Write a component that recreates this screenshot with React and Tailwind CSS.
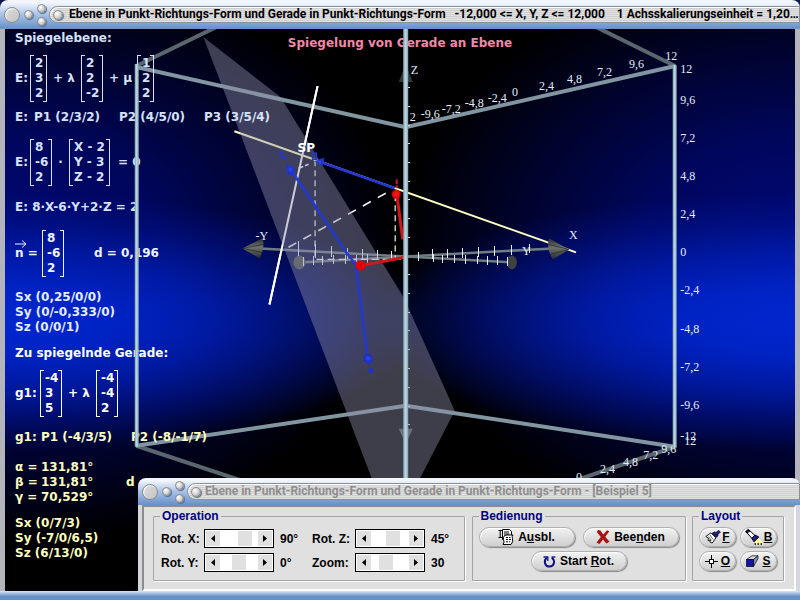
import React, { useState } from "react";
import clsx from "clsx";

const topScale = [
  { x: 409, y: 121, t: "2" },
  { x: 420, y: 118, t: "-9,6" },
  { x: 441, y: 113, t: "-7,2" },
  { x: 464, y: 107, t: "-4,8" },
  { x: 487, y: 102, t: "-2,4" },
  { x: 511, y: 96, t: "0" },
  { x: 538, y: 90, t: "2,4" },
  { x: 566, y: 83, t: "4,8" },
  { x: 596, y: 76, t: "7,2" },
  { x: 628, y: 68, t: "9,6" },
  { x: 664, y: 60, t: "12" },
];

const rightScale = [
  { x: 679, y: 73, t: "12" },
  { x: 679, y: 104, t: "9,6" },
  { x: 679, y: 142, t: "7,2" },
  { x: 679, y: 180, t: "4,8" },
  { x: 679, y: 218, t: "2,4" },
  { x: 679, y: 256, t: "0" },
  { x: 679, y: 294, t: "-2,4" },
  { x: 679, y: 332, t: "-4,8" },
  { x: 679, y: 370, t: "-7,2" },
  { x: 679, y: 408, t: "-9,6" },
  { x: 679, y: 439, t: "-12" },
  { x: 683, y: 444, t: "12" },
];

const bottomScale = [
  { x: 575, y: 480, t: "0" },
  { x: 599, y: 472, t: "2,4" },
  { x: 622, y: 465, t: "4,8" },
  { x: 642, y: 458, t: "7,2" },
  { x: 660, y: 452, t: "9,6" },
];

// tick marks as [x, top, bottom]
const ticks = [
  [418, 252, 261], [432, 249, 259], [447, 249, 258], [462, 248, 258], [478, 247, 257],
  [494, 246, 256], [511, 245, 255], [529, 244, 253],
  [433, 254, 262], [442, 255, 263], [454, 255, 263], [465, 255, 264], [477, 256, 264],
  [487, 256, 265], [497, 256, 265], [507, 257, 266],
  [298, 241, 256], [315, 244, 258], [331, 246, 257], [347, 248, 259], [362, 249, 259],
  [377, 250, 260], [391, 251, 261], [303, 257, 266], [313, 256, 265], [322, 256, 265],
  [333, 255, 264], [345, 255, 264], [356, 255, 263], [367, 254, 263],
];

const zTicks = [87, 106, 125, 143, 162, 181, 199, 218, 237, 274, 293, 312, 330, 349, 368, 387, 406, 424];

function Scale({ items }) {
  return items.map((i) => (
    <text key={i.x + i.t + i.y} x={i.x} y={i.y}>
      {i.t}
    </text>
  ));
}

function Scene() {
  return (
    <svg className="absolute inset-0 h-full w-full" viewBox="5 29 790 561" preserveAspectRatio="xMinYMin slice">
      <defs>
        <radialGradient id="redBall">
          <stop offset="0" stopColor="#ff2020" />
          <stop offset="1" stopColor="#d00000" />
        </radialGradient>
        <radialGradient id="blueBall">
          <stop offset="0" stopColor="#2c48f0" />
          <stop offset="1" stopColor="#1c2cb0" />
        </radialGradient>
        <linearGradient id="cone" x1="0" x2="0" y1="0" y2="1">
          <stop offset="0" stopColor="#2a2d2c" />
          <stop offset="0.45" stopColor="#6c736f" />
          <stop offset="1" stopColor="#252827" />
        </linearGradient>
      </defs>

      {/* back edges of the cube */}
      <g strokeWidth="4" stroke="#5a666e">
        <line x1="136" y1="66" x2="216" y2="27" />
        <line x1="674" y1="66" x2="595" y2="27" />
        <line x1="136" y1="445" x2="242" y2="480" />
        <line x1="674" y1="446" x2="570" y2="481" />
      </g>
      <g strokeWidth="4" stroke="#8296a2" fill="none">
        <polyline points="136,67 405,127 674,66" />
        <polyline points="136,445 405,405 674,446" />
      </g>

      {/* axes */}
      <g fill="#343837">
        <path d="M405 64 L412 82 L398 82 Z" />
        <path d="M398 428 L412 428 L405 443 Z" fill="#555b5c" />
      </g>
      <g stroke="#6f7d83" strokeWidth="2.5">
        <line x1="260" y1="248" x2="510" y2="262" />
        <line x1="299" y1="262" x2="552" y2="248" />
      </g>
      <ellipse cx="511" cy="262" rx="5" ry="7" fill="#3c4240" />
      <ellipse cx="299" cy="262" rx="6" ry="7" fill="#4a4e4d" />
      <path d="M242 248 L262 238 Q265 248 259 258 Z" fill="url(#cone)" />
      <path d="M242 248 L263 244 M242 248 L262 252" stroke="#1c1e1d" strokeWidth="0.6" />
      <g stroke="#e4ecf2" strokeWidth="1" shapeRendering="crispEdges">
        {ticks.map(([x, a, b], i) => (
          <line key={i} x1={x} y1={a} x2={x} y2={b} />
        ))}
        {zTicks.map((y) => (
          <line key={y} x1="404" y1={y} x2="409" y2={y} />
        ))}
      </g>

      <g strokeWidth="1.6" stroke="#f4f4f4" fill="none">
        <line x1="385" y1="193" x2="286" y2="248" strokeDasharray="9 8" />
        <line x1="298" y1="168" x2="308" y2="164" strokeDasharray="5 2" />
        <line x1="314.5" y1="160" x2="314.5" y2="258" strokeDasharray="6 4" strokeWidth="1.2" />
        <line x1="394.5" y1="195" x2="394.5" y2="257" strokeDasharray="6 4" strokeWidth="1.2" />
        <line x1="316" y1="259" x2="402" y2="259" strokeDasharray="7 4" strokeWidth="1.2" />
      </g>

      <line x1="317" y1="86" x2="269" y2="304" stroke="#fff" strokeWidth="2" />
      <line x1="234" y1="131" x2="575" y2="252" stroke="#ffffc4" strokeWidth="2" />
      <path d="M568 249 L548 238 Q545 249 552 259 Z" fill="url(#cone)" />
      <path d="M568 249 L547 244 M568 249 L549 254" stroke="#1c1e1d" strokeWidth="0.6" />

      {/* mirror plane */}
      <polygon points="203,37 280,97 403,297 454,410 418,480 372,480" fill="#8d8da8" fillOpacity="0.44" />

      <g stroke="#fff" strokeWidth="2">
        <line x1="317" y1="86" x2="304" y2="145" />
        <line x1="280" y1="254" x2="269" y2="304" />
      </g>

      {/* vectors */}
      <g stroke="#2338d0" strokeWidth="2.5" fill="none">
        <line x1="318" y1="161" x2="394" y2="188" />
        <polyline points="290,169 345,251 355,264 367,357" />
      </g>
      <path d="M314 161 L324 157 L322 166 Z" fill="url(#blueBall)" />
      <path d="M286 164 L294 168 L292 174 L287 174 Z" fill="url(#blueBall)" stroke="#2338d0" />
      <ellipse cx="367.5" cy="358" rx="5" ry="4.5" fill="url(#blueBall)" />
      <path d="M364 360 L371 360 L369 365 Z" fill="#1f33c4" />
      <circle cx="370" cy="370" r="2.5" fill="#1f33c4" />
      <path d="M279 152 l3 2 M281 156 l4 3" stroke="#2338d0" strokeWidth="3" />
      <path d="M312 153 h4 v6 h-4 z" stroke="#2338d0" strokeWidth="1.3" fill="none" />
      <g stroke="#d01818" strokeWidth="3">
        <line x1="396" y1="193" x2="402" y2="239" />
        <line x1="360" y1="265" x2="403" y2="257" />
        <line x1="396" y1="179" x2="396" y2="188" strokeWidth="2" strokeDasharray="5 1" />
      </g>
      <circle cx="395.5" cy="194" r="4.5" fill="url(#redBall)" />
      <circle cx="360" cy="265" r="5" fill="url(#redBall)" />
      <path d="M354 262 L362 260 L362 270 Z" fill="#e00000" />

      <g className="text-[12px]" fill="#e2eefa" fontFamily="Liberation Serif, serif">
        <Scale items={topScale} />
        <Scale items={rightScale} />
        <Scale items={bottomScale} />
        <text x="568" y="239">X</text>
        <text x="255" y="240">-Y</text>
        <text x="410" y="74">Z</text>
        <text x="521" y="255">Y</text>
      </g>
      <text x="297" y="152" className="text-[12px] font-bold" fill="#fff" fontFamily="DejaVu Sans, sans-serif">
        SP
      </text>
    </svg>
  );
}

// upright cube edges, they run in front of the formulas
function Poles() {
  return (
    <svg className="pointer-events-none absolute inset-0 h-full w-full" viewBox="5 29 790 561" preserveAspectRatio="xMinYMin slice">
      <defs>
        <linearGradient id="pole" x1="0" x2="1">
          <stop offset="0" stopColor="#7f9eac" />
          <stop offset="0.5" stopColor="#bfdbe5" />
          <stop offset="1" stopColor="#7f9eac" />
        </linearGradient>
      </defs>
      <rect x="134.5" y="64" width="4" height="382" fill="url(#pole)" />
      <rect x="671.5" y="65" width="4" height="382" fill="url(#pole)" />
      <rect x="402.5" y="29" width="5" height="450" fill="url(#pole)" />
    </svg>
  );
}

function Matrix({ rows, className }) {
  return (
    <div className={clsx("relative shrink-0 py-px pl-[5px]", className)}>
      <span className="absolute inset-y-0 left-0 w-1 border-y border-l border-current" />
      {rows.map((r, i) => (
        <div key={i} className="whitespace-nowrap">{r}</div>
      ))}
      <span className="absolute inset-y-0 right-0 w-1 border-y border-r border-current" />
    </div>
  );
}

function Formulas() {
  return (
    <div className="relative pl-[10px] pt-[2px] font-['DejaVu_Sans',sans-serif] text-[12px] font-bold leading-[15px] text-[#d6e2fb] whitespace-pre">
      <p>Spiegelebene:</p>
      <div className="mt-[9px] flex items-center">
        <span className="w-[15px]">E:</span>
        <Matrix rows={["2", "3", "2"]} className="w-[17px]" />
        <span className="w-[34px] pl-[6px]">+ λ</span>
        <Matrix rows={["2", "2", "-2"]} className="w-[22px]" />
        <span className="w-[34px] pl-[6px]">+ μ</span>
        <Matrix rows={["1", "2", "2"]} className="w-[17px]" />
      </div>
      <div className="mt-2 flex">
        <span className="w-[19px]">E:</span>
        <span className="w-[85px]">P1 (2/3/2)</span>
        <span className="w-[85px]">P2 (4/5/0)</span>
        <span>P3 (3/5/4)</span>
      </div>
      <div className="mt-[14px] flex items-center">
        <span className="w-[15px]">E:</span>
        <Matrix rows={["8", "-6", "2"]} className="w-[22px]" />
        <span className="w-[17px] text-center">·</span>
        <Matrix rows={["X - 2", "Y - 3", "Z - 2"]} className="w-[41px]" />
        <span className="pl-2">= 0</span>
      </div>
      <p className="mt-[14px]">E: 8·X-6·Y+2·Z = 2</p>

      <div className="mt-[15px] flex items-center text-[#eef4ff]">
        <span className="relative w-[27px]">
          n =
          <svg className="absolute -top-[6px] left-0 h-2 w-3" viewBox="0 0 12 8" fill="none" stroke="currentColor">
            <path d="M0 4 H11 M7 0.5 L11 4 L7 7.5" />
          </svg>
        </span>
        <Matrix rows={["8", "-6", "2"]} className="w-[22px]" />
        <span className="pl-[30px]">d = 0,196</span>
      </div>
      <div className="mt-[13px] text-[#e4ecff]">
        <p>Sx (0,25/0/0)</p>
        <p>Sy (0/-0,333/0)</p>
        <p>Sz (0/0/1)</p>
      </div>

      <p className="mt-[11px] text-[#fffff0]">Zu spiegelnde Gerade:</p>
      <div className="mt-[9px] flex items-center text-[#fffff0]">
        <span className="w-[25px]">g1:</span>
        <Matrix rows={["-4", "3", "5"]} className="w-[22px]" />
        <span className="w-[34px] pl-[6px]">+ λ</span>
        <Matrix rows={["-4", "-4", "2"]} className="w-[22px]" />
      </div>
      <div className="mt-[13px] flex text-[#ffffc0]">
        <span className="w-[26px]">g1:</span>
        <span className="w-[90px]">P1 (-4/3/5)</span>
        <span>P2 (-8/-1/7)</span>
      </div>
      <div className="mt-[15px] grid grid-cols-[26px_85px_auto] text-[#ffffc0]">
        <span>α =</span>
        <span>131,81°</span>
        <span />
        <span>β =</span>
        <span>131,81°</span>
        <span>d</span>
        <span>γ =</span>
        <span>70,529°</span>
      </div>
      <div className="mt-[11px] text-[#ffffc0]">
        <p>Sx (0/7/3)</p>
        <p>Sy (-7/0/6,5)</p>
        <p>Sz (6/13/0)</p>
      </div>
    </div>
  );
}

function Orb({ className, label }) {
  return (
    <button
      type="button"
      aria-label={label}
      className={clsx(
        "shrink-0 rounded-full border border-[#8a8a8a] bg-radial-[at_35%_30%] from-white via-[#d4d4d4] to-[#9c9c9c] shadow-[1px_1px_1px_#55709a]",
        className
      )}
    />
  );
}

function TitleBar({ children, muted, className }) {
  return (
    <header
      className={clsx(
        "flex shrink-0 items-center bg-linear-to-b from-[#f2f6fc] from-10% via-[#a9c2e6] to-[#6690c8] pl-1",
        className
      )}
    >
      <button
        type="button"
        aria-label="Menü"
        className="size-4 shrink-0 rounded-full border border-[#8c8c8c] bg-linear-to-br from-[#dcdcdc] to-[#c4c4c4] shadow-[inset_1px_1px_1px_#fff]"
      />
      <Orb label="Minimieren" className="ml-1 size-[9px]" />
      <div className="ml-1 flex flex-col gap-1">
        <Orb label="Maximieren" className="size-[9px]" />
        <Orb label="Wiederherstellen" className="size-[9px]" />
      </div>
      <div className="ml-[3px] flex h-[17px] min-w-0 flex-1 items-center gap-1 rounded-l-full border border-[#8a8f96] bg-[repeating-linear-gradient(#e2e2e2_0_1px,#cfcfcf_1px_2px)] pl-[3px] shadow-[inset_1px_1px_0_#fff]">
        <Orb label="Schließen" className="size-[10px]" />
        <h1
          className={clsx(
            "truncate font-['Roboto','Liberation_Sans',sans-serif] text-[12px] leading-[15px] font-bold whitespace-pre",
            muted ? "text-[#8e8e8e]" : "pl-[2px] text-black"
          )}
        >
          {children}
        </h1>
      </div>
    </header>
  );
}

function ScrollControl({ id, label, min, max, value, unit, onChange }) {
  const step = (d) => onChange(Math.min(max, Math.max(min, value + d)));
  return (
    <div className="flex items-center">
      <label htmlFor={id} className="w-[43px]">{label}</label>
      <div className="flex h-[19px] w-[70px] border border-black bg-white p-px">
        <button type="button" aria-label={label + " kleiner"} onClick={() => step(-1)} className="flex w-[14px] items-center justify-center bg-[#e0e0e0]">
          <svg className="h-[7px] w-1" viewBox="0 0 4 7"><path d="M4 0 V7 L0 3.5 Z" /></svg>
        </button>
        <input
          id={id}
          type="range"
          min={min}
          max={max}
          value={value}
          onChange={(e) => onChange(Number(e.target.value))}
          className="h-full w-0 min-w-0 flex-1 appearance-none bg-white [&::-webkit-slider-thumb]:h-[15px] [&::-webkit-slider-thumb]:w-[14px] [&::-webkit-slider-thumb]:appearance-none [&::-webkit-slider-thumb]:bg-[#e0e0e0]"
        />
        <button type="button" aria-label={label + " größer"} onClick={() => step(1)} className="flex w-[14px] items-center justify-center bg-[#e0e0e0]">
          <svg className="h-[7px] w-1" viewBox="0 0 4 7"><path d="M0 0 V7 L4 3.5 Z" /></svg>
        </button>
      </div>
      <output htmlFor={id} className="pl-[6px]">{value}{unit}</output>
    </div>
  );
}

function Group({ title, className, children }) {
  return (
    <fieldset className={clsx("rounded-[1px] border border-[#a4a4a4] px-[6px] pb-2 shadow-[1px_1px_0_#fff]", className)}>
      <legend className="px-[2px] leading-[14px] text-[#000080]">{title}</legend>
      {children}
    </fieldset>
  );
}

function PillButton({ className, children }) {
  return (
    <button
      type="button"
      className={clsx(
        "flex h-5 items-center justify-center rounded-full border border-[#b0b0b0] bg-linear-to-b from-[#f2f2f2] to-[#cfcfcf] shadow-[1px_1px_1px_#8a8a8a,inset_1px_1px_0_#fff]",
        className
      )}
    >
      {children}
    </button>
  );
}

function PagesIcon() {
  return (
    <svg className="size-4" viewBox="0 0 16 16" fill="none" stroke="#000">
      <path d="M0.5 1.5 H4 M0.5 8.5 H4 M2.2 1.5 V8.5" />
      <path d="M4.5 0.5 H11.5 L13.5 2.5 V10.5 H4.5 Z" fill="#fff" />
      <path d="M6 3 H11 M6 5 H11.5" />
      <path d="M5.5 8.5 Q6 5.5 9 6 H15 Q13.5 7.5 14.5 9.5 Q15.5 13 13 15.5 H5 Q7 13 5.5 10.5 Z" fill="#fff" />
      <path d="M8 8.5 H12.5 M8 10.5 H13 M8 12.8 H12" strokeDasharray="2 1" />
    </svg>
  );
}

function CrossIcon() {
  return (
    <svg className="size-[14px]" viewBox="0 0 14 14">
      <path d="M2 0 L4.5 0.5 L7.2 4.5 L11 0.3 L13.3 1.3 L9.3 6.7 L13.5 11.7 L10.3 13.5 L7 9.5 L3.5 14 L0.5 12.5 L4.8 7 L0.8 2 Z" fill="#a81414" />
    </svg>
  );
}

function RotateIcon() {
  return (
    <svg className="size-[13px]" viewBox="0 0 13 13" fill="none" stroke="#10108c">
      <path d="M3.8 2.8 C0.4 5.5 1.6 11.6 6.4 11.6 C11.4 11.6 12.6 5.8 8.8 2.4" strokeWidth="2" />
      <path d="M0.5 2 H4.8 V6" strokeWidth="1.3" />
      <path d="M8.5 2 H12.5" strokeWidth="1.3" />
    </svg>
  );
}

function BrushIcon() {
  return (
    <svg className="h-[14px] w-[16px]" viewBox="0 0 16 14" fill="none" stroke="#000">
      <path d="M0.8 6.5 L6 2.8 L11 7.8 L7.2 13 L4.8 12 L5.5 10 L3 10.5 L3.5 8.2 Z" fill="#fff" strokeWidth="0.9" />
      <path d="M3.5 6.5 L6.5 10.5 M5 5 L8 9.5" strokeWidth="0.6" />
      <path d="M6.8 3.5 L9.5 1.8 L11 2.5 L13.5 0.3 L15.5 2 L13 4.5 L13 6 L10.8 7.5 Z" fill="#20207a" strokeWidth="0.6" />
    </svg>
  );
}

function TorchIcon() {
  return (
    <svg className="h-4 w-[18px]" viewBox="0 0 18 16" fill="none" stroke="#000">
      <path d="M9.5 13 L13.5 9 L17.5 13 V15.5 H9.5 Z" fill="#fff7a0" stroke="none" />
      <path d="M0.8 2.5 L3.5 0.5 L10 6.5 L7 9.5 Z" fill="#fff" />
      <path d="M10 6 L13.8 8 L9 12.8 L6.8 9.3 Z" fill="#20208c" />
      <path d="M0.8 2.5 L3.5 0.5 L5 2 L2 4 Z" fill="#20208c" />
      <path d="M9.5 15 H17" strokeDasharray="1.5 1.5" strokeWidth="1.5" />
    </svg>
  );
}

function OriginIcon() {
  return (
    <svg className="size-[13px]" viewBox="0 0 13 13" fill="none" stroke="#000">
      <path d="M0 6.5 H4 M9 6.5 H13 M6.5 0 V4 M6.5 9 V13" />
      <rect x="4.5" y="4.5" width="4" height="4" fill="#fff" />
    </svg>
  );
}

function CubeIcon() {
  return (
    <svg className="h-[12px] w-[13px]" viewBox="0 0 13 12" stroke="#000" strokeWidth="0.7">
      <path d="M0.5 4.5 L6 0.8 H12 L7.5 4.5 Z" fill="#d4d8e4" />
      <path d="M7.5 4.5 L12 0.8 V3.5 L7.5 11.5 Z" fill="#8c94b8" />
      <path d="M0.5 4.5 H7.5 V11.5 H0.5 Z" fill="#1414a8" />
    </svg>
  );
}

function ToolWindow() {
  const [rotX, setRotX] = useState(90);
  const [rotY, setRotY] = useState(0);
  const [rotZ, setRotZ] = useState(45);
  const [zoom, setZoom] = useState(30);

  return (
    <section className="absolute bottom-0 left-[138px] right-0 flex flex-col rounded-t-lg font-['Liberation_Sans',Arial,sans-serif] text-[12px] font-bold leading-[14px] text-black">
      <TitleBar muted className="h-[27px] rounded-t-lg">
        Ebene in Punkt-Richtungs-Form und Gerade in Punkt-Richtungs-Form - [Beispiel 5]
      </TitleBar>
      <div className="border-x-4 border-[#d4d8de] bg-[#e0e0e0]">
        <div className="flex justify-between border-2 border-[#8c8c8c] border-r-white border-b-white pt-[2px] pr-[10px] pb-2 pl-[9px]">
          <Group title="Operation" className="w-[312px]">
            <div className="grid grid-cols-[151px_auto] gap-y-[5px] pt-[6px] pl-px">
              <ScrollControl id="rotx" label="Rot. X:" min={-180} max={180} value={rotX} unit="°" onChange={setRotX} />
              <ScrollControl id="rotz" label="Rot. Z:" min={-180} max={180} value={rotZ} unit="°" onChange={setRotZ} />
              <ScrollControl id="roty" label="Rot. Y:" min={-180} max={180} value={rotY} unit="°" onChange={setRotY} />
              <ScrollControl id="zoom" label="Zoom:" min={0} max={90} value={zoom} unit="" onChange={setZoom} />
            </div>
          </Group>
          <Group title="Bedienung" className="w-[214px]">
            <div className="flex flex-wrap justify-center gap-x-2 gap-y-1 pt-1">
              <PillButton className="w-24 gap-1"><PagesIcon /><span>A<u>u</u>sbl.</span></PillButton>
              <PillButton className="w-24 gap-1"><CrossIcon /><span>Bee<u>n</u>den</span></PillButton>
              <PillButton className="w-24 gap-1"><RotateIcon /><span>Start <u>R</u>ot.</span></PillButton>
            </div>
          </Group>
          <Group title="Layout" className="w-[92px]">
            <div className="grid grid-cols-2 gap-1 pt-1">
              <PillButton className="gap-px"><BrushIcon /><u>F</u></PillButton>
              <PillButton className="gap-px"><TorchIcon /><u>B</u></PillButton>
              <PillButton className="gap-[3px]"><OriginIcon /><u>O</u></PillButton>
              <PillButton className="gap-[3px]"><CubeIcon /><u>S</u></PillButton>
            </div>
          </Group>
        </div>
      </div>
      <div className="h-[9px] bg-linear-to-b from-[#dbe6f4] to-[#6690c8] to-60%" />
    </section>
  );
}

export default function App() {
  return (
    <div className="relative flex h-screen min-h-[600px] flex-col overflow-hidden bg-[#101c50]">
      <TitleBar className="h-[29px] rounded-t-lg">
        {"Ebene in Punkt-Richtungs-Form und Gerade in Punkt-Richtungs-Form   -12,000 <= X, Y, Z <= 12,000    1 Achsskalierungseinheit = 1,20..."}
      </TitleBar>
      <main className="relative min-h-0 flex-1 overflow-hidden border-x-[5px] border-[#b4b4bc] bg-black bg-[radial-gradient(ellipse_54%_23%_at_0%_52%,#0026cc_0%,#0023c4_25%,#001eb4d0_50%,#00149078_78%,transparent_100%),radial-gradient(ellipse_54%_23%_at_100%_52%,#0026cc_0%,#0023c4_25%,#001eb4d0_50%,#00149078_78%,transparent_100%),radial-gradient(ellipse_50%_52%_at_0%_40%,#00087a_0%,#00065c_40%,transparent_100%),radial-gradient(ellipse_50%_52%_at_100%_40%,#00087a_0%,#00065c_40%,transparent_100%)]">
        <Scene />
        <Formulas />
        <h2 className="absolute inset-x-0 top-[7px] text-center font-['DejaVu_Sans',sans-serif] text-[12px] font-bold leading-[15px] text-[#f088a8]">
          Spiegelung von Gerade an Ebene
        </h2>
        <Poles />
      </main>
      <footer className="h-[9px] shrink-0 bg-linear-to-b from-[#dbe6f4] to-[#6690c8] to-60%" />
      <ToolWindow />
    </div>
  );
}
